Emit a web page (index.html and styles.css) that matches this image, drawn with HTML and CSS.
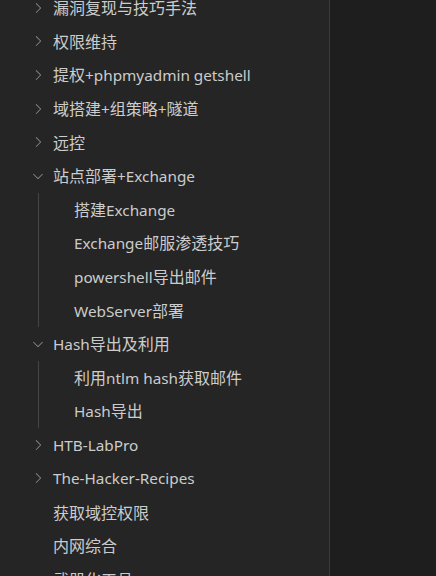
FILE: index.html
```html
<!DOCTYPE html>
<html>
<head>
<meta charset="utf-8">
<link rel="stylesheet" href="styles.css">
</head>
<body>
<div class="app">
  <aside class="sidebar">
    <ul class="tree">
      <li class="row"><svg class="chev" viewBox="0 0 16 16"><path d="M10.072 8.024L5.715 3.667l.618-.62L11 7.716v.618L6.333 13l-.618-.619 4.357-4.357z"/></svg><span><span class="zh">漏洞复现与技巧手法</span></span></li>
      <li class="row"><svg class="chev" viewBox="0 0 16 16"><path d="M10.072 8.024L5.715 3.667l.618-.62L11 7.716v.618L6.333 13l-.618-.619 4.357-4.357z"/></svg><span><span class="zh">权限维持</span></span></li>
      <li class="row"><svg class="chev" viewBox="0 0 16 16"><path d="M10.072 8.024L5.715 3.667l.618-.62L11 7.716v.618L6.333 13l-.618-.619 4.357-4.357z"/></svg><span><span class="zh">提权</span>+phpmyadmin getshell</span></li>
      <li class="row"><svg class="chev" viewBox="0 0 16 16"><path d="M10.072 8.024L5.715 3.667l.618-.62L11 7.716v.618L6.333 13l-.618-.619 4.357-4.357z"/></svg><span><span class="zh">域搭建</span>+<span class="zh">组策略</span>+<span class="zh">隧道</span></span></li>
      <li class="row"><svg class="chev" viewBox="0 0 16 16"><path d="M10.072 8.024L5.715 3.667l.618-.62L11 7.716v.618L6.333 13l-.618-.619 4.357-4.357z"/></svg><span><span class="zh">远控</span></span></li>
      <li class="row"><svg class="chev" viewBox="0 0 16 16"><path d="M7.976 10.072l4.357-4.357.62.618L8.284 11h-.618L3 6.333l.619-.618 4.357 4.357z"/></svg><span><span class="zh">站点部署</span>+Exchange</span></li>
      <li class="group">
        <ul class="children">
          <li class="child"><span><span class="zh">搭建</span>Exchange</span></li>
          <li class="child"><span>Exchange<span class="zh">邮服渗透技巧</span></span></li>
          <li class="child"><span>powershell<span class="zh">导出邮件</span></span></li>
          <li class="child"><span>WebServer<span class="zh">部署</span></span></li>
        </ul>
      </li>
      <li class="row"><svg class="chev" viewBox="0 0 16 16"><path d="M7.976 10.072l4.357-4.357.62.618L8.284 11h-.618L3 6.333l.619-.618 4.357 4.357z"/></svg><span>Hash<span class="zh">导出及利用</span></span></li>
      <li class="group">
        <ul class="children">
          <li class="child"><span><span class="zh">利用</span>ntlm hash<span class="zh">获取邮件</span></span></li>
          <li class="child"><span>Hash<span class="zh">导出</span></span></li>
        </ul>
      </li>
      <li class="row"><svg class="chev" viewBox="0 0 16 16"><path d="M10.072 8.024L5.715 3.667l.618-.62L11 7.716v.618L6.333 13l-.618-.619 4.357-4.357z"/></svg><span>HTB-LabPro</span></li>
      <li class="row"><svg class="chev" viewBox="0 0 16 16"><path d="M10.072 8.024L5.715 3.667l.618-.62L11 7.716v.618L6.333 13l-.618-.619 4.357-4.357z"/></svg><span>The-Hacker-Recipes</span></li>
      <li class="row leaf"><span class="zh">获取域控权限</span></li>
      <li class="row leaf"><span class="zh">内网综合</span></li>
      <li class="row leaf"><span class="zh">武器化工具</span></li>
    </ul>
  </aside>
  <main class="editor"></main>
</div>
</body>
</html>
```

FILE: styles.css
```css
html, body {
  margin: 0;
  padding: 0;
  height: 100%;
  overflow: hidden;
  background: #1e1e1e;
}
.app {
  display: flex;
  height: 576px;
}
.sidebar {
  width: 329px;
  flex: none;
  background: #252525;
  border-right: 1px solid #3a3a3a;
  overflow: hidden;
}
.editor {
  flex: 1;
  background: #1e1e1e;
}
.tree, .children {
  list-style: none;
  margin: 0;
  padding: 0;
}
.tree {
  margin-top: -9px;
  font-family: "Noto Sans", "Noto Sans CJK SC", sans-serif;
  font-size: 15.3px;
  line-height: 20px;
  color: #cccccc;
}
.zh {
  font-family: "Noto Sans CJK SC", sans-serif;
  font-size: 16px;
}
.row {
  height: 33.6px;
  display: flex;
  align-items: center;
  padding-left: 30px;
  gap: 7px;
  white-space: nowrap;
}
.row.leaf {
  padding-left: 53px;
}
.chev {
  width: 16px;
  height: 16px;
  flex: none;
  fill: #8a8a8a;
}
.children {
  margin-left: 38px;
  border-left: 1px solid #454545;
}
.child {
  height: 33.6px;
  display: flex;
  align-items: center;
  padding-left: 35px;
  white-space: nowrap;
}
```
